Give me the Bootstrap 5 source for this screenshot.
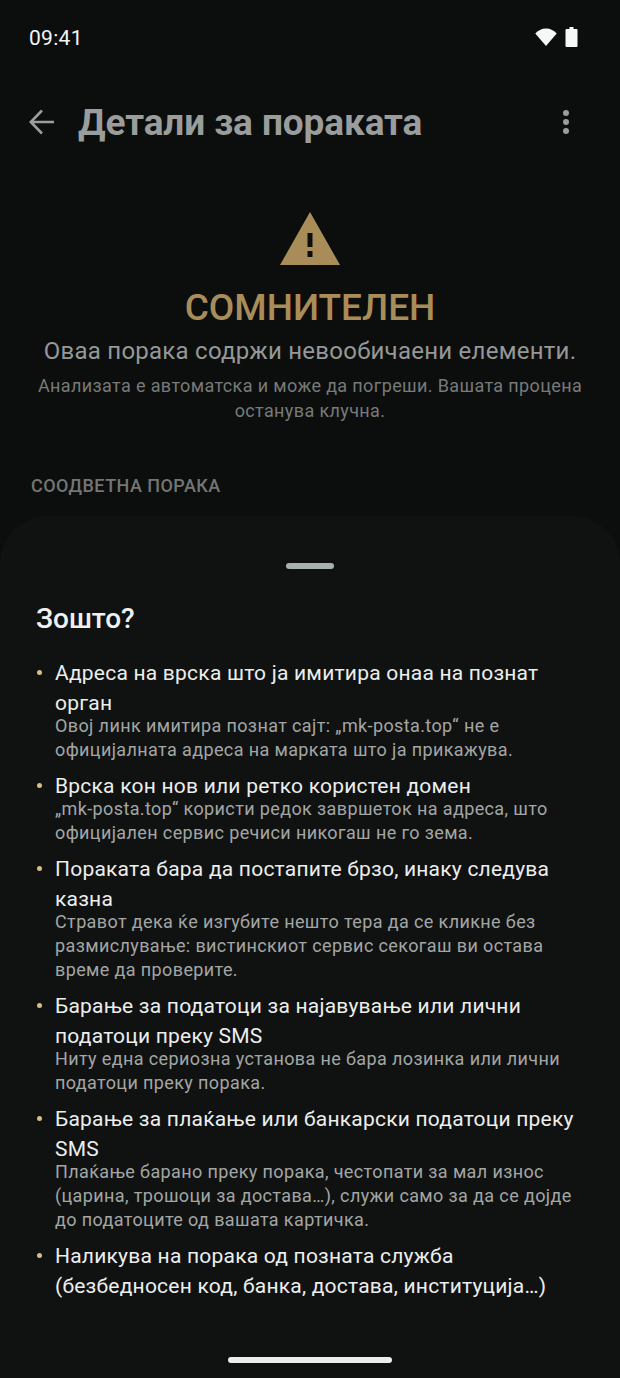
<!DOCTYPE html>
<html lang="mk"><head><meta charset="utf-8"><title>Детали за пораката</title>
<link href="https://cdn.jsdelivr.net/npm/bootstrap@5.3.0/dist/css/bootstrap.min.css" rel="stylesheet">
<style>
html,body{height:100%;margin:0}
body{background:#0c0e0e;font-family:Roboto,"Liberation Sans",sans-serif;overflow:hidden}
.scr{height:1378px;width:620px;position:relative;overflow:hidden}
.stbar{padding:24px 42px 0 29px;height:80px;color:#f4f5f5;font-size:21px;line-height:28px;letter-spacing:.3px}
.stic{padding-top:3px}
.apbar{height:84px;padding:0 50px 0 29px;color:#9a9d9b}
.apttl{font-size:37px;font-weight:700;margin:2px 0 0 23px;line-height:44px;letter-spacing:-.1px;color:#9a9d9b}
.hero{padding:0 30px;text-align:center;margin-top:48px}
.hero svg{display:block}
.verdict{font-size:37px;line-height:44px;font-weight:500;color:#a98d59;margin:21px 0 0}
.sub1{font-size:24px;line-height:32px;color:#959896;margin:5px 0 0;letter-spacing:.25px}
.sub2{font-size:18px;line-height:25px;color:#777a78;margin:6px 0 0;letter-spacing:.37px}
.seclab{font-size:18px;font-weight:500;line-height:24px;color:#737674;margin:51px 0 0 31px;letter-spacing:.45px}
.sheet{position:absolute;left:0;right:0;top:516px;bottom:0;background:#101212;border-radius:48px 48px 0 0;padding:47px 36px 0}
.grab{width:48px;height:6px;border-radius:3px;background:#a9b0ae}
.whyttl{font-size:28px;line-height:36px;font-weight:500;color:#eff0ef;margin:32px 0 0;}
.why{list-style:none;padding:0;margin:21px 0 0}
.why li{position:relative;padding-left:19px;margin-bottom:9px}
.why li::before{content:"";position:absolute;left:1px;top:12px;width:5px;height:5px;border-radius:50%;background:#d9bd84}
.wt{display:block;font-size:21px;line-height:30px;color:#eceeed;letter-spacing:.22px}
.wd{display:block;font-size:18px;line-height:24px;color:#a3a6a4;letter-spacing:.38px;margin-top:-4px}
.homeb{position:absolute;left:228px;bottom:15px;width:164px;height:6px;border-radius:3px;background:#eceeed}
</style></head>
<body><div class="scr">
<div class="stbar d-flex justify-content-between align-items-start">
<span>09:41</span>
<span class="stic d-flex align-items-center gap-2">
<svg width="22" height="20" viewBox="0 0 22 20"><path fill="#f6f7f7" d="M11 19 .3 6.600C2.800 3.400 6.600 1.400 11 1.400s8.200 2 10.700 5.200z"/></svg>
<svg width="13" height="20" viewBox="0 0 12 20"><path fill="#f6f7f7" d="M4 0h4v2h3a1 1 0 0 1 1 1v16a1 1 0 0 1-1 1H1a1 1 0 0 1-1-1V3a1 1 0 0 1 1-1h3z"/></svg>
</span></div>
<div class="apbar d-flex align-items-center">
<svg width="26" height="26" viewBox="0 0 26 26" fill="none" stroke="#9a9d9b" stroke-width="2.600"><path d="M25 13H2M13 1.500 1.800 13 13 24.500"/></svg>
<h1 class="apttl flex-grow-1">Детали за пораката</h1>
<svg width="8" height="26" viewBox="0 0 8 26" fill="#9a9d9b"><circle cx="4" cy="4" r="3"/><circle cx="4" cy="13" r="3"/><circle cx="4" cy="22" r="3"/></svg>
</div>
<div class="hero">
<svg class="mx-auto" width="60" height="53" viewBox="0 0 60 53"><path fill="#a98d59" fill-rule="evenodd" d="M30 0 60 53H0zM27.500 21v14h5V21zm0 18v6h5v-6z"/></svg>
<div class="verdict">СОМНИТЕЛЕН</div>
<p class="sub1">Оваа порака содржи невообичаени елементи.</p>
<p class="sub2">Анализата е автоматска и може да погреши. Вашата процена останува клучна.</p>
</div>
<div class="seclab">СООДВЕТНА ПОРАКА</div>
<div class="sheet">
<div class="grab mx-auto"></div>
<h2 class="whyttl">Зошто?</h2>
<ul class="why">
<li><span class="wt">Адреса на врска што ја имитира онаа на познат орган</span><span class="wd">Овој линк имитира познат сајт: „mk-posta.top“ не е официјалната адреса на марката што ја прикажува.</span></li>
<li><span class="wt">Врска кон нов или ретко користен домен</span><span class="wd">„mk-posta.top“ користи редок завршеток на адреса, што официјален сервис речиси никогаш не го зема.</span></li>
<li><span class="wt">Пораката бара да постапите брзо, инаку следува казна</span><span class="wd">Стравот дека ќе изгубите нешто тера да се кликне без размислување: вистинскиот сервис секогаш ви остава време да проверите.</span></li>
<li><span class="wt">Барање за податоци за најавување или лични податоци преку SMS</span><span class="wd">Ниту една сериозна установа не бара лозинка или лични податоци преку порака.</span></li>
<li><span class="wt">Барање за плаќање или банкарски податоци преку SMS</span><span class="wd">Плаќање барано преку порака, честопати за мал износ (царина, трошоци за достава…), служи само за да се дојде до податоците од вашата картичка.</span></li>
<li><span class="wt">Наликува на порака од позната служба (безбедносен код, банка, достава, институција…)</span></li>
</ul>
</div>
<div class="homeb"></div>
</div>
<script src="https://cdn.jsdelivr.net/npm/bootstrap@5.3.0/dist/js/bootstrap.bundle.min.js"></script>
</body></html>
